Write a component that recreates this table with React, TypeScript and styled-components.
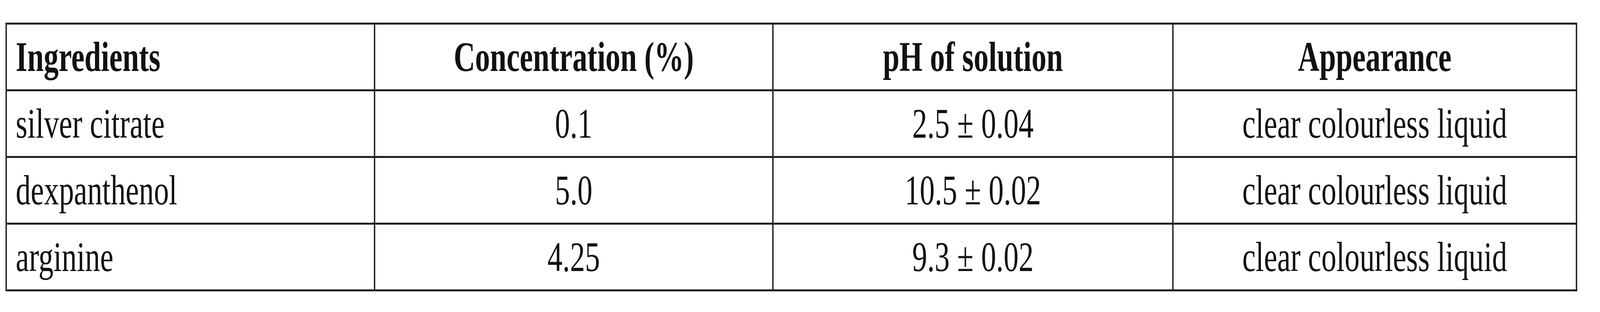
import React, { useEffect, useState } from "react";
import styled, { createGlobalStyle } from "styled-components";

// The table is laid out at the reference's own pixel size (5816 wide)
// and then fitted to whatever width the window really has.
const DESIGN_WIDTH = 5816;

const GlobalStyle = createGlobalStyle`
  html, body {
    margin: 0;
    padding: 0;
    background: #ffffff;
  }
  body {
    overflow: hidden;
  }
`;

const Viewport = styled.div`
  width: 100vw;
  height: 800px;
  overflow: hidden;
  background: #ffffff;
`;

const Page = styled.div`
  width: ${DESIGN_WIDTH}px;
  height: 800px;
  padding: 58px 0 0 20px;
  box-sizing: border-box;
  transform-origin: 0 0;
  font-family: "Liberation Serif", "Times New Roman", serif;
  color: #111111;
`;

const Table = styled.div`
  display: grid;
  grid-template-columns: 1339px 1448px 1454px 1467px;
  width: max-content;
  border-left: 5px solid #1e1e1e;
  border-top: 5px solid #1e1e1e;
`;

const Cell = styled.div<{ $align: "left" | "center"; $head?: boolean }>`
  box-sizing: border-box;
  height: 171px;
  border-right: 5px solid #1e1e1e;
  border-bottom: 5px solid #1e1e1e;
  display: flex;
  align-items: center;
  justify-content: ${(p) => (p.$align === "left" ? "flex-start" : "center")};
  padding-left: ${(p) => (p.$align === "left" ? "32px" : "0")};
  font-size: ${(p) => (p.$head ? "108px" : "109px")};
  font-weight: ${(p) => (p.$head ? 700 : 400)};
  line-height: normal;
  white-space: nowrap;
`;

const headers = ["Ingredients", "Concentration (%)", "pH of solution", "Appearance"];

const rows = [
  ["silver citrate", "0.1", "2.5 ± 0.04", "clear colourless liquid"],
  ["dexpanthenol", "5.0", "10.5 ± 0.02", "clear colourless liquid"],
  ["arginine", "4.25", "9.3 ± 0.02", "clear colourless liquid"],
];

const fit = () => window.innerWidth / DESIGN_WIDTH;

const App: React.FunctionComponent = () => {
  const [scale, setScale] = useState(fit);

  useEffect(() => {
    const onResize = () => setScale(fit());
    window.addEventListener("resize", onResize);
    return () => window.removeEventListener("resize", onResize);
  }, []);

  return (
    <>
      <GlobalStyle />
      <Viewport>
        <Page style={{ transform: `scaleX(${scale})` }}>
          <Table>
            {headers.map((h, i) => (
              <Cell key={h} $head $align={i === 0 ? "left" : "center"}>
                {h}
              </Cell>
            ))}
            {rows.map((r) =>
              r.map((v, i) => (
                <Cell key={r[0] + i} $align={i === 0 ? "left" : "center"}>
                  {v}
                </Cell>
              ))
            )}
          </Table>
        </Page>
      </Viewport>
    </>
  );
};

export default App;
